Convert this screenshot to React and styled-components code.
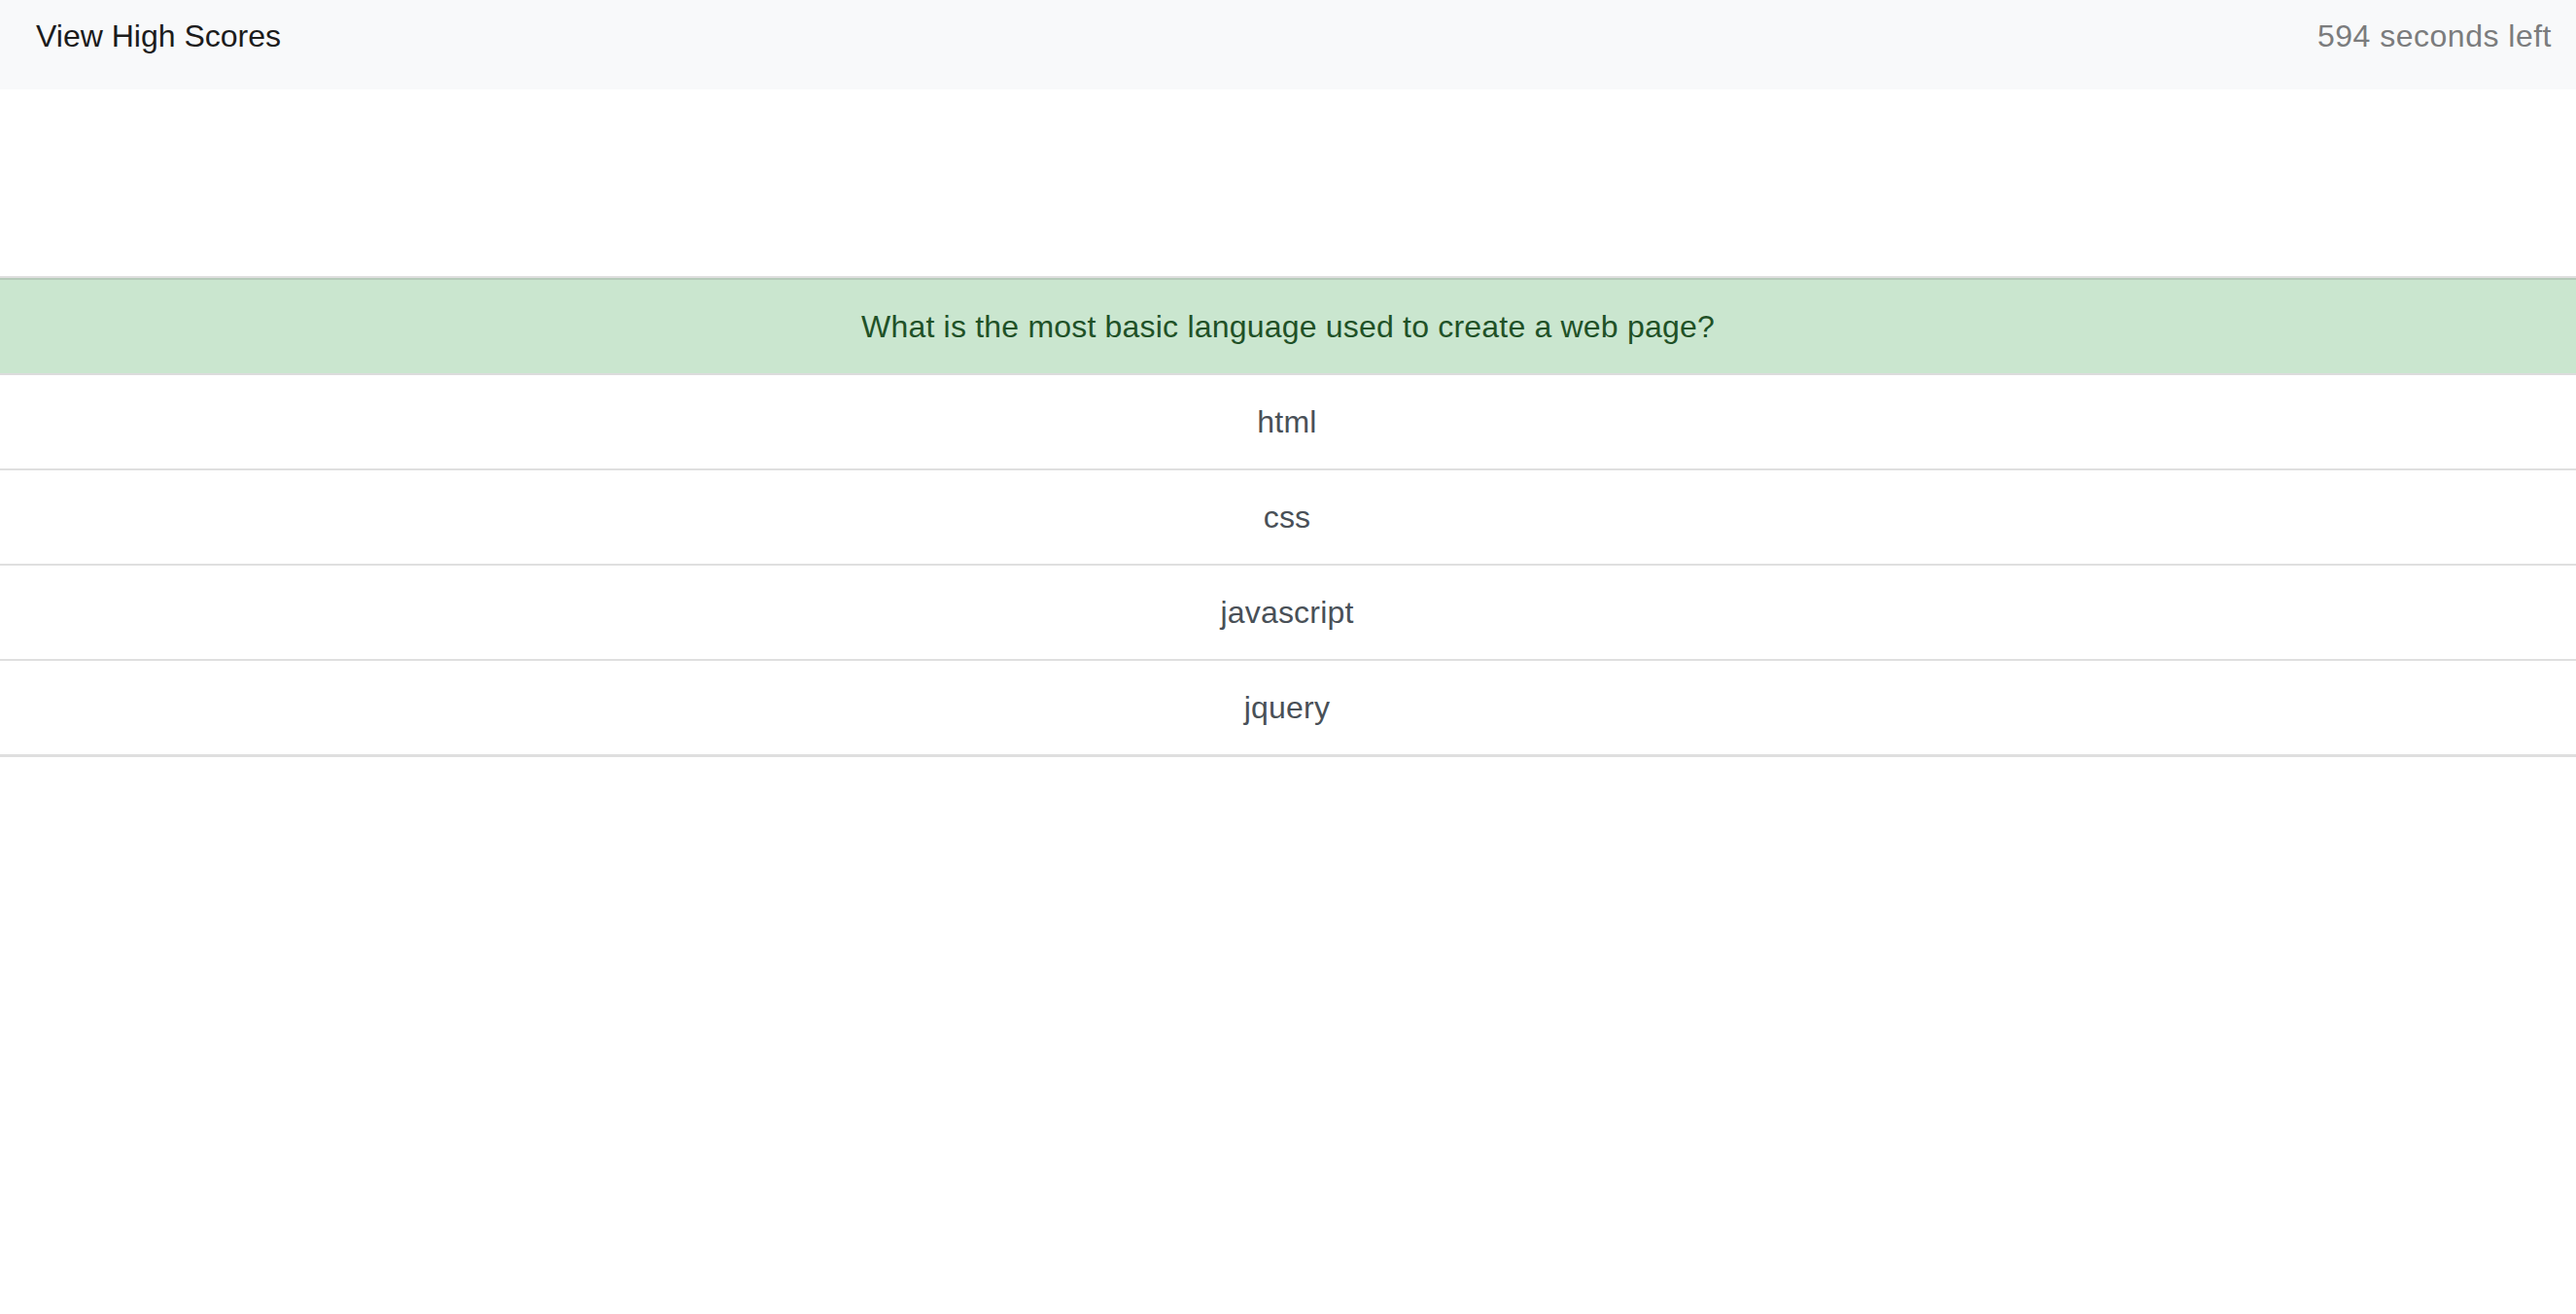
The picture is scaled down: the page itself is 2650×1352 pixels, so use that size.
import React from "react"
import styled, { createGlobalStyle } from "styled-components"

const GlobalStyle = createGlobalStyle`
  html, body {
    margin: 0;
    padding: 0;
    background: #ffffff;
    font-family: "Liberation Sans", Arial, sans-serif;
  }
`

const question = {
  text: "What is the most basic language used to create a web page?",
  choices: ["html", "css", "javascript", "jquery"],
}

const App = () => {
  return (
    <Page>
      <GlobalStyle />
      <NavBar>
        <Brand>View High Scores</Brand>
        <Timer>594 seconds left</Timer>
      </NavBar>
      <QuizList>
        <QuestionItem>{question.text}</QuestionItem>
        {question.choices.map((choice, i) => (
          <ChoiceItem key={choice} last={i === question.choices.length - 1}>
            {choice}
          </ChoiceItem>
        ))}
      </QuizList>
    </Page>
  )
}

export default App

const Page = styled.div`
  min-height: 1352px;
  background: #ffffff;
`
const NavBar = styled.nav`
  height: 92px;
  box-sizing: border-box;
  padding: 13px 25px 0 37px;
  background: #f8f9fa;
  display: flex;
  justify-content: space-between;
  align-items: flex-start;
  font-size: 32px;
  line-height: 48px;
`
const Brand = styled.a`
  color: #1c1c1c;
  cursor: pointer;
`
const Timer = styled.span`
  color: #7b7c7d;
  letter-spacing: 0.5px;
`
const QuizList = styled.ul`
  list-style: none;
  margin: 192px 0 0;
  padding: 0;
  border-top: 2px solid #dfdfdf;
`
const QuestionItem = styled.li`
  padding: 24px 40px;
  font-size: 32px;
  line-height: 48px;
  letter-spacing: 0.2px;
  text-align: center;
  background: #cae6cf;
  color: #1f5127;
  border-top: 2px solid #b6cbba;
  border-bottom: 2px solid #dcdcdc;
`
const ChoiceItem = styled.li`
  padding: 24px 42px 24px 40px;
  font-size: 32px;
  line-height: 48px;
  letter-spacing: 0.2px;
  text-align: center;
  background: #ffffff;
  color: #495057;
  cursor: pointer;
  border-bottom: ${(p) => (p.last ? "3px" : "2px")} solid #dfdfdf;
`
